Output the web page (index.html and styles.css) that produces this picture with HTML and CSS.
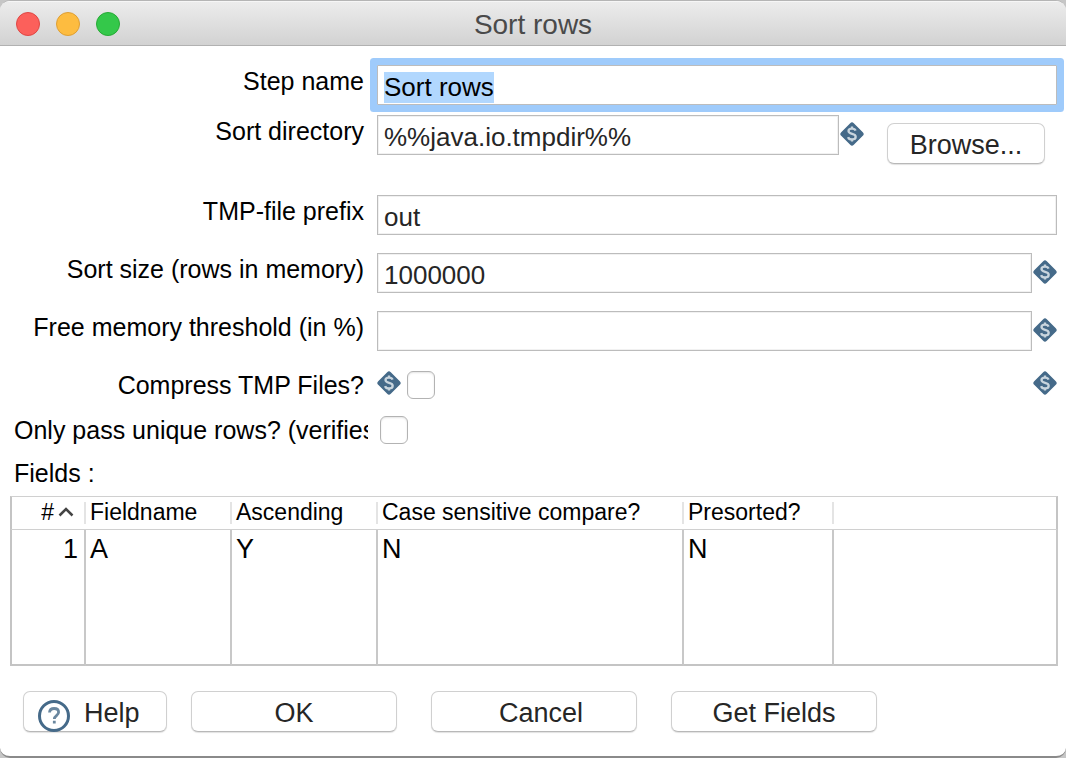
FILE: index.html
```html
<!DOCTYPE html>
<html lang="en">
<head>
<meta charset="utf-8">
<title>Sort rows</title>
<link rel="stylesheet" href="styles.css">
</head>
<body>
<svg class="defs" aria-hidden="true">
  <symbol id="variable" viewBox="0 0 24 24">
    <path d="M10.200 1.200a2.500 2.500 0 0 1 3.600 0L22.800 10.200a2.500 2.500 0 0 1 0 3.600L13.800 22.800a2.500 2.500 0 0 1-3.600 0L1.200 13.800a2.500 2.500 0 0 1 0-3.600z" fill="#456a89"/>
    <path d="M15.600 8.600C15 7.200 13.700 6.600 12 6.600c-2.100 0-3.500 1-3.500 2.500 0 3.700 7.200 2 7.200 5.700 0 1.700-1.600 2.700-3.700 2.700-2 0-3.400-.8-3.900-2.400M12 4.500v2M12 17.500v2" fill="none" stroke="#c9d5de" stroke-width="2.300"/>
  </symbol>
</svg>
<main class="window">
  <header class="titlebar">
    <div class="lights">
      <button type="button" class="light close" aria-label="Close"></button>
      <button type="button" class="light minimize" aria-label="Minimize"></button>
      <button type="button" class="light zoom" aria-label="Zoom"></button>
    </div>
    <h1 class="title">Sort rows</h1>
  </header>
  <form class="form">
    <div class="row row-step">
      <label class="label" for="step">Step name</label>
      <input class="field focused" id="step" type="text" value="Sort rows">
    </div>
    <div class="row row-directory">
      <label class="label" for="directory">Sort directory</label>
      <div class="control">
        <input class="field" id="directory" type="text" value="%%java.io.tmpdir%%">
        <svg class="variable"><use href="#variable"/></svg>
      </div>
      <button type="button" class="button browse">Browse...</button>
    </div>
    <div class="row row-prefix">
      <label class="label" for="prefix">TMP-file prefix</label>
      <input class="field" id="prefix" type="text" value="out">
    </div>
    <div class="row">
      <label class="label" for="size">Sort size (rows in memory)</label>
      <div class="control">
        <input class="field" id="size" type="text" value="1000000">
        <svg class="variable"><use href="#variable"/></svg>
      </div>
    </div>
    <div class="row">
      <label class="label" for="memory">Free memory threshold (in %)</label>
      <div class="control">
        <input class="field" id="memory" type="text">
        <svg class="variable"><use href="#variable"/></svg>
      </div>
    </div>
    <div class="row">
      <label class="label" for="compress">Compress TMP Files?</label>
      <div class="checks">
        <svg class="variable"><use href="#variable"/></svg>
        <input class="check" id="compress" type="checkbox">
        <svg class="variable trailing"><use href="#variable"/></svg>
      </div>
    </div>
    <div class="row row-unique">
      <label class="label clipped" for="unique">Only pass unique rows? (verifies</label>
      <div class="checks">
        <input class="check" id="unique" type="checkbox">
      </div>
    </div>
    <table class="table">
      <caption class="caption">Fields :</caption>
      <colgroup><col class="c-num"><col class="c-name"><col class="c-name"><col class="c-case"><col class="c-presorted"><col></colgroup>
      <thead>
        <tr>
          <th class="num">#<svg class="sort" viewBox="0 0 16 10"><path d="M1.500 8.500 8 2l6.500 6.500" fill="none" stroke="#444" stroke-width="2.500"/></svg></th>
          <th>Fieldname</th><th>Ascending</th><th>Case sensitive compare?</th><th>Presorted?</th><th></th>
        </tr>
      </thead>
      <tbody>
        <tr><td class="num">1</td><td>A</td><td>Y</td><td>N</td><td>N</td><td></td></tr>
      </tbody>
    </table>
    <div class="actions">
      <button type="button" class="button help"><svg class="help-icon" viewBox="0 0 32 32"><circle cx="16" cy="16" r="14.500" fill="#fff" stroke="#456a89" stroke-width="3"/><path d="M11.500 12.500c.2-2.500 2-4 4.600-4 2.700 0 4.500 1.500 4.500 3.800 0 3.200-4.300 3.300-4.300 6.700M16.300 20.800v2.800" fill="none" stroke="#6a879f" stroke-width="2.800"/></svg>Help</button>
      <button type="button" class="button wide">OK</button>
      <button type="button" class="button wide cancel">Cancel</button>
      <button type="button" class="button wide">Get Fields</button>
    </div>
  </form>
</main>
<script src="script.js"></script>
</body>
</html>
```
FILE: styles.css
```css
* { box-sizing: border-box; }

body {
  margin: 0;
  background: #c6c6c6;
  color: #000;
  font-family: "Liberation Sans", Helvetica, Arial, sans-serif;
}

.defs { position: absolute; width: 0; height: 0; }

.window {
  background: #fff;
  border-top: 1px solid #b5b5b5;
  border-bottom: 2px solid #8a8a8a;
  border-radius: 10px;
  overflow: hidden;
}

.titlebar {
  display: grid;
  grid-template-columns: 1fr auto 1fr;
  align-items: center;
  height: 45px;
  padding: 0 16px;
  background: linear-gradient(#ececec, #d2d2d2);
  border-top: 1px solid #f6f6f6;
  border-bottom: 1px solid #b1b1b1;
}

.lights { display: flex; gap: 16px; }

.light {
  width: 24px;
  height: 24px;
  padding: 0;
  border: 1px solid;
  border-radius: 50%;
}
.close { background: #fc605b; border-color: #df4744; }
.minimize { background: #fdbc40; border-color: #de9f34; }
.zoom { background: #34c84a; border-color: #27aa35; }

.title {
  margin: 0;
  padding-top: 2px;
  color: #4a4a4a;
  font-size: 28px;
  font-weight: 400;
  line-height: 32px;
}

.form { padding: 19px 8px 24px 10px; }

.row {
  display: flex;
  align-items: flex-start;
  gap: 13px;
  margin-bottom: 18px;
  padding: 0 1px 0 4px;
}
.row-step { margin-bottom: 10px; }
.row-directory { margin-bottom: 31px; }
.row-unique { margin: -6px 0 10px; gap: 12px; }

.label {
  flex: none;
  width: 350px;
  font-size: 25px;
  line-height: 33px;
  text-align: right;
  white-space: nowrap;
}
.clipped {
  width: 354px;
  overflow: hidden;
  text-align: left;
}

.field {
  flex: 1;
  min-width: 0;
  height: 40px;
  padding: 4px 6px 0;
  border: 1px solid #bcbcbc;
  border-radius: 0;
  outline: none;
  background: #fff;
  box-shadow: inset 0 0 0 1px #f1f1f1;
  color: #262626;
  font-family: inherit;
  font-size: 26px;
}
.focused {
  box-shadow: 0 0 0 7px #9fcbfb;
  border-radius: 1px;
  color: #000;
}
.field::selection { background: #b1d7fe; color: #000; }

.control {
  display: flex;
  flex: 1;
  align-items: flex-start;
  gap: 1px;
  min-width: 0;
}

.variable {
  flex: none;
  width: 24px;
  height: 24px;
}
.control .variable { margin-top: 7px; }

.checks {
  display: flex;
  flex: 1;
  align-items: flex-start;
  gap: 6px;
  padding-top: 2px;
}
.trailing { margin-left: auto; }

.check {
  width: 28px;
  height: 28px;
  margin: 0;
  appearance: none;
  border: 1px solid #b3b3b3;
  border-radius: 6px;
  background: #fff;
  box-shadow: inset 0 1px 2px #e4e4e4;
}

.button {
  height: 41px;
  padding: 3px 0 0;
  border: 1px solid #d0d0d0;
  border-bottom-color: #b8b8b8;
  border-radius: 7px;
  background: #fff;
  box-shadow: 0 1px 1px #e2e2e2;
  color: #262626;
  font-family: inherit;
  font-size: 27px;
}
.browse {
  width: 158px;
  margin: 8px 12px 0 10px;
}

.table {
  width: 100%;
  table-layout: fixed;
  border-collapse: separate;
  border-spacing: 0;
}
.caption {
  padding: 0 4px 6px;
  font-size: 25px;
  line-height: 33px;
  text-align: left;
}
.c-num { width: 76px; }
.c-name { width: 146px; }
.c-case { width: 306px; }
.c-presorted { width: 150px; }

th {
  height: 34px;
  padding: 0 0 2px 4px;
  border-top: 1px solid #d0d0d0;
  border-bottom: 1px solid #d0d0d0;
  background: linear-gradient(#e4e4e4, #e4e4e4) right center / 2px 22px no-repeat;
  font-size: 23px;
  font-weight: 400;
  line-height: 28px;
  text-align: left;
  white-space: nowrap;
}
td {
  height: 136px;
  padding: 3px 0 0 4px;
  border-right: 2px solid #c8c8c8;
  border-bottom: 2px solid #c4c4c4;
  font-size: 27px;
  line-height: 32px;
  vertical-align: top;
}
th:first-child, td:first-child { border-left: 2px solid #c4c4c4; }
th:last-child { border-right: 2px solid #c4c4c4; background: none; }
th.num { padding-right: 12px; text-align: right; }
td.num { padding-right: 6px; text-align: right; }

.sort {
  width: 16px;
  height: 10px;
  margin-left: 4px;
  vertical-align: 3px;
}

.actions {
  display: flex;
  gap: 34px;
  padding: 25px 0 0 13px;
}
.help {
  display: flex;
  align-items: center;
  gap: 14px;
  width: 144px;
  margin-right: -10px;
  padding-left: 14px;
}
.help-icon {
  width: 32px;
  height: 32px;
  margin-top: 6px;
}
.wide { width: 206px; }
.cancel { padding-left: 14px; }
```
FILE: script.js
```js
const step = document.getElementById("step");
step.focus();
step.select();
```
